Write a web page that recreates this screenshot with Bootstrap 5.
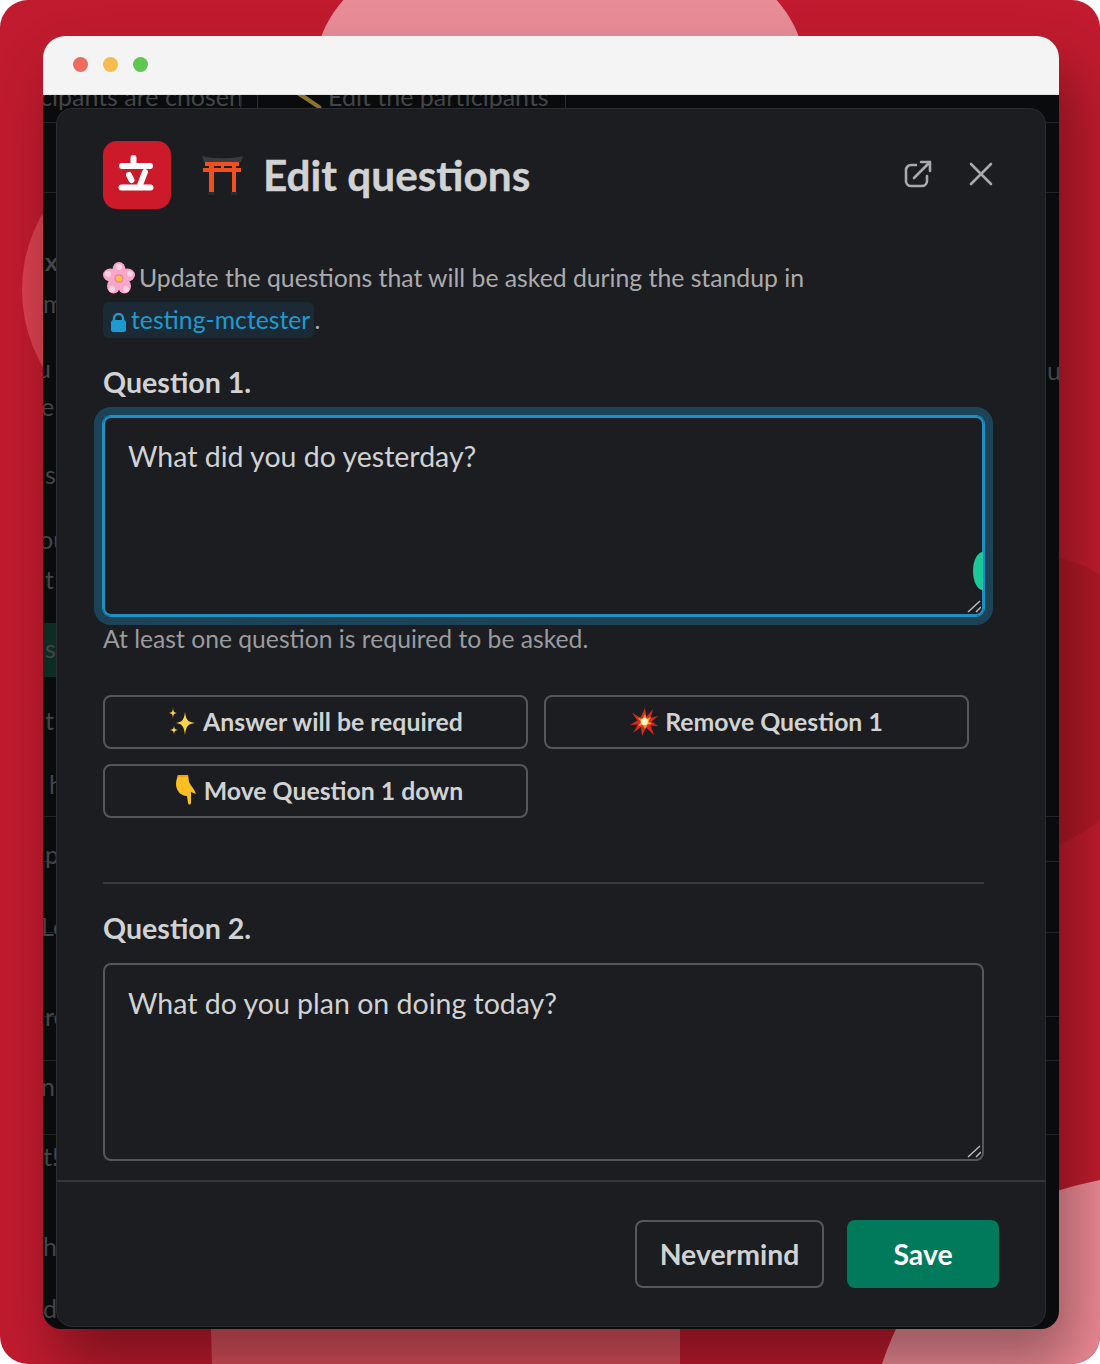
<!DOCTYPE html>
<html lang="en">
<head>
    <meta charset="UTF-8">
    <title>Edit questions</title>
    <link href="https://cdn.jsdelivr.net/npm/bootstrap@5.3.2/dist/css/bootstrap.min.css" rel="stylesheet">
    <style>
        html, body { margin: 0; background: #fff; }
        body { font-family: Lato, "Open Sans", sans-serif; }
        .stage {
            position: relative;
            width: 1100px;
            height: 1364px;
            padding: 36px 41px 35px 43px;
            background: #c01b2e;
            border-radius: 28px;
            overflow: hidden;
        }
        .blobs { position: absolute; inset: 0; }
        .app-window {
            position: relative;
            height: 1293px;
            border-radius: 22px 22px 18px 18px;
            background: #0a0b0d;
            overflow: hidden;
            box-shadow: 14px 36px 60px rgba(0, 0, 0, .36);
        }
        .title-bar {
            position: relative;
            z-index: 2;
            height: 59px;
            padding: 0 0 2px 30px;
            gap: 15px;
            background: #f4f4f4;
            border-bottom: 1px solid #e4e4e4;
        }
        .dot { width: 15px; height: 15px; border-radius: 50%; }
        .dot-r { background: #ee6b60; }
        .dot-y { background: #f5bd4f; }
        .dot-g { background: #61c554; }
        .behind { position: absolute; inset: 0; color: #434548; font-size: 25px; line-height: 1; }
        .behind span { position: absolute; white-space: nowrap; }
        .behind i { position: absolute; left: 0; width: 100%; height: 1px; background: #212326; }
        .behind u { position: absolute; top: 59px; width: 1px; height: 20px; background: #2a2c2f; }
        .behind .green-row { position: absolute; left: 0; top: 587px; width: 14px; height: 54px; background: #0e2d22; }
        .slack-modal {
            position: relative;
            z-index: 1;
            height: 1219px;
            margin: 13px 13px 0;
            background: #1b1d21;
            border: 1px solid #2b2d31;
            border-radius: 16px;
            color: #d1d2d3;
        }
        .modal-top { height: 100px; padding: 32px 52px 0 46px; }
        .app-logo { width: 68px; height: 68px; border-radius: 14px; background: #cd1a2b; }
        .modal-title { margin: 0 0 0 20px; font-size: 42.300px; font-weight: 700; line-height: 68px; color: #d1d2d3; -webkit-text-stroke: .4px #d1d2d3; }
        .torii { margin: 15px 0 0 31px; }
        .modal-main { height: 971px; padding: 48px 61px 0 46px; overflow: hidden; }
        .intro { margin: 0; font-size: 24.75px; line-height: 42px; color: #ababad; }
        .intro svg { vertical-align: -7px; margin-right: 4px; }
        .chan { display: inline-block; height: 36px; padding: 0 4px 0 8px; line-height: 36px; border-radius: 6px; background: #1c2a35; color: #1d9bd1; }
        .chan svg { vertical-align: -3px; margin-right: 5px; }
        .q-label { margin: 0 0 16px; font-size: 28.6px; font-weight: 700; line-height: 36px; color: #d1d2d3; }
        .q-label-2 { margin-bottom: 17px; }
        .q-box {
            display: block;
            width: 881px;
            padding: 19px 23px;
            font-family: inherit;
            font-size: 28.5px;
            line-height: 38px;
            color: #d1d2d3;
            background: transparent;
            border: 2px solid #55575b;
            border-radius: 8px;
            resize: none;
        }
        .q-box.form-control { background: transparent; color: #d1d2d3; border-color: #55575b; }
        .q-box.is-on.form-control { border-color: #1d8fc0; box-shadow: 0 0 0 1px #1d8fc0, 0 0 0 9px #1d4358; }
        .field-wrap { position: relative; width: 881px; }
        .gram-dot { position: absolute; left: 870px; top: 136px; width: 10px; height: 38px; border-radius: 100% 0 0 100% / 50% 0 0 50%; background: #1cc79a; }
        .grip { position: absolute; right: 3px; bottom: 3px; }
        .hint { margin: 4px 0 37px; font-size: 24.7px; line-height: 38px; color: #9a9b9e; }
        .act-grid { display: grid; grid-template-columns: 425px 425px; gap: 15px 16px; }
        .act-btn.btn {
            height: 54px;
            padding: 0;
            display: flex;
            align-items: center;
            justify-content: center;
            gap: 7px;
            font-size: 24.8px;
            font-weight: 700;
            color: #d1d2d3;
            border: 2px solid #55575b;
            border-radius: 8px;
        }
        .finger { margin: 0 1px 2px 8px; }
        .rule { width: 881px; height: 2px; margin: 64px 0 26px; background: #36383c; }
        .q2-box { height: 198px; }
        .modal-bottom {
            height: 146px;
            padding: 38px 46px 0 0;
            border-top: 2px solid #34363a;
        }
        .foot-btn.btn {
            height: 68px;
            padding: 0;
            font-size: 28.4px;
            font-weight: 700;
            border-radius: 8px;
        }
        .foot-ghost.btn { width: 189px; color: #d1d2d3; border: 2px solid #55575b; background: transparent; }
        .foot-save.btn { width: 152px; margin-left: 23px; color: #fff; background: #007a5a; border: 0; }
    </style>
</head>
<body>
<div class="stage">
    <!-- background shapes behind the window -->
    <svg class="blobs" width="1100" height="1364" viewBox="0 0 1100 1364">
        <ellipse cx="560" cy="70" rx="245" ry="150" fill="#e88c98"/>
        <circle cx="175" cy="290" r="153" fill="#d8404f"/>
        <path d="M1100 575C1070 556 1040 552 1000 556V860C1050 855 1080 835 1100 820Z" fill="#b01826"/>
        <path d="M210 1300H680V1364H212Z" fill="#d8505c"/>
        <path d="M882 1364C920 1250 1000 1200 1100 1180V1364Z" fill="#ee8a95"/>
    </svg>

    <div class="app-window">
        <div class="title-bar d-flex align-items-center">
            <div class="dot dot-r"></div>
            <div class="dot dot-y"></div>
            <div class="dot dot-g"></div>
        </div>

        <!-- dimmed page under the modal -->
        <div class="behind">
            <span style="left:-3px;top:48px">cipants are chosen</span>
            <u style="left:197px"></u>
            <u style="left:214px"></u>
            <svg style="position:absolute;left:254px;top:59px" width="26" height="14" viewBox="0 0 26 14"><path d="M0 0H8L24 11 25 14 20 13Z" fill="#8a7330"/></svg>
            <span style="left:285px;top:48px">Edit the participants</span>
            <u style="left:522px"></u>
            <i style="top:86px"></i>
            <i style="top:156px"></i>
            <i style="top:780px"></i>
            <i style="top:825px"></i>
            <i style="top:896px"></i>
            <i style="top:980px"></i>
            <i style="top:1024px"></i>
            <i style="top:1098px"></i>
            <b class="green-row"></b>
            <span style="left:2px;top:213px;font-weight:700">x</span>
            <span style="left:0;top:255px">m</span>
            <span style="left:-6px;top:320px">u</span>
            <span style="left:-2px;top:358px">e</span>
            <span style="left:2px;top:426px">s</span>
            <span style="left:-4px;top:491px">ou</span>
            <span style="left:2px;top:531px">t</span>
            <span style="left:2px;top:600px">s</span>
            <span style="left:2px;top:672px">t</span>
            <span style="left:6px;top:736px">h</span>
            <span style="left:2px;top:806px">p</span>
            <span style="left:-2px;top:878px">Le</span>
            <span style="left:2px;top:968px">re</span>
            <span style="left:-2px;top:1038px">n</span>
            <span style="left:0;top:1108px">t!</span>
            <span style="left:0;top:1198px">h</span>
            <span style="left:0;top:1260px">d</span>
            <span style="left:1004px;top:322px">u</span>
        </div>

        <div class="slack-modal d-flex flex-column">
            <div class="modal-top d-flex align-items-start">
                <div class="app-logo">
                    <svg width="68" height="68" viewBox="0 0 68 68" fill="none" stroke="#fff" stroke-width="6" stroke-linecap="round">
                        <path d="M19 25H47M18.500 46.500H47.500M30.500 17V24M26 34L28.500 39M42 31L37 44"/>
                    </svg>
                </div>
                <svg class="torii" width="41" height="40" viewBox="0 0 41 40">
                    <path d="M0 0C10 3 31 3 41 0L39 6H2Z" fill="#3b3b3d"/>
                    <path d="M3 6H37V10H3ZM1 12H39V16H1ZM7 6H12V36H7ZM30 6H34V36H30ZM19 10H22V12H19Z" fill="#f0501e"/>
                    <path d="M6 36H12V39H6ZM29 36H35V39H29Z" fill="#2a2a2c"/>
                </svg>
                <h1 class="modal-title">Edit questions</h1>
                <div class="ms-auto d-flex align-items-center" style="gap:37px;margin-top:19px">
                    <svg width="28" height="28" viewBox="0 0 28 28" fill="none" stroke="#a8a9ab" stroke-width="2.6" stroke-linecap="round" stroke-linejoin="round">
                        <path d="M12 5H7A5 5 0 0 0 2 10V21A5 5 0 0 0 7 26H18A5 5 0 0 0 23 21V16M10 18L26 2M17 2H26V11"/>
                    </svg>
                    <svg width="24" height="24" viewBox="0 0 24 24" fill="none" stroke="#a8a9ab" stroke-width="2.6" stroke-linecap="round">
                        <path d="M2 2L22 22M22 2L2 22"/>
                    </svg>
                </div>
            </div>

            <div class="modal-main">
                <p class="intro">
                    <svg width="32" height="32" viewBox="0 0 32 32">
                        <g fill="#f9a6cb">
                            <ellipse cx="16" cy="8" rx="6.500" ry="8"/>
                            <ellipse cx="24.500" cy="13" rx="7.500" ry="6.500"/>
                            <ellipse cx="21.500" cy="24" rx="6.500" ry="7.500"/>
                            <ellipse cx="10.500" cy="24" rx="6.500" ry="7.500"/>
                            <ellipse cx="7.500" cy="13" rx="7.500" ry="6.500"/>
                        </g>
                        <g fill="#fdd0e2">
                            <circle cx="16" cy="5" r="3"/>
                            <circle cx="27" cy="12" r="3"/>
                            <circle cx="23" cy="27" r="3"/>
                            <circle cx="9" cy="27" r="3"/>
                            <circle cx="5" cy="12" r="3"/>
                        </g>
                        <circle cx="16" cy="16.500" r="4.500" fill="#ef7fb0"/>
                        <circle cx="16" cy="16.500" r="3" fill="#f5c542"/>
                    </svg>Update the questions that will be asked during the standup in<br>
                    <span class="chan"><svg width="15" height="19" viewBox="0 0 15 19"><path d="M3 8V5.500a4.500 4.500 0 0 1 9 0V8" fill="none" stroke="#1d9bd1" stroke-width="2.400"/><rect y="7" width="15" height="12" rx="2.500" fill="#1d9bd1"/></svg>testing-mctester</span>.
                </p>

                <h2 class="q-label" style="margin-top:23px">Question 1.</h2>
                <div class="field-wrap">
                    <textarea class="form-control q-box is-on" style="height:200px">What did you do yesterday?</textarea>
                    <div class="gram-dot"></div>
                    <svg class="grip" width="14" height="13" viewBox="0 0 14 13" stroke="#b9babb" stroke-width="1.500" fill="none"><path d="M1 12L13 1M9 12L14 7"/></svg>
                </div>
                <p class="hint">At least one question is required to be asked.</p>

                <div class="act-grid">
                    <button type="button" class="btn act-btn">
                        <svg width="28" height="28" viewBox="0 0 28 28" fill="#f8d34c">
                            <path d="M17 4C18 12 20 14 27 15 20 16 18 18 17 27 16 18 14 16 8 15 14 14 16 12 17 4Z"/>
                            <path d="M5 0C5.500 4 6 4.500 9 5 6 5.500 5.500 6 5 10 4.500 6 4 5.500 1 5 4 4.500 4.500 4 5 0Z"/>
                            <path d="M6 18C6.500 21 7 21.500 10 22 7 22.500 6.500 23 6 26 5.500 23 5 22.500 2 22 5 21.500 5.500 21 6 18Z"/>
                        </svg>
                        Answer will be required
                    </button>
                    <button type="button" class="btn act-btn">
                        <svg width="28" height="28" viewBox="0 0 28 28">
                            <path d="M15 0L16.500 9 23 1 20.500 10 28 8 21.500 13.500 28 18 20.500 17.500 24 27 16 19.500 12 28 11 19 3 25 8 16.500 0 17 7.500 12.500 2 5 10.500 9.500Z" fill="#d9291c"/>
                            <path d="M15 6L16.500 11 21 9 18.500 13.500 22 16 17.500 16.500 15 21 13 17 8 18 11 14 8 10 12.500 11Z" fill="#fb9b2c"/>
                            <circle cx="14.500" cy="13.500" r="3.500" fill="#fff6c9"/>
                        </svg>
                        Remove Question 1
                    </button>
                    <button type="button" class="btn act-btn">
                        <svg class="finger" width="20" height="30" viewBox="0 0 20 30">
                            <path d="M2 0H12L13 7C15 11 19 15 20 19L15 17 15 28C14.500 30 12.500 30 12 28L11 21C5 21 0 16 0 9 0 6 1 3 2 0Z" fill="#fbbf24"/>
                            <path d="M2 0H12L12.300 2H1.500Z" fill="#e8a317"/>
                        </svg>
                        Move Question 1 down
                    </button>
                </div>

                <div class="rule"></div>

                <h2 class="q-label q-label-2">Question 2.</h2>
                <div class="field-wrap">
                    <textarea class="form-control q-box q2-box">What do you plan on doing today?</textarea>
                    <svg class="grip" width="14" height="13" viewBox="0 0 14 13" stroke="#b9babb" stroke-width="1.500" fill="none"><path d="M1 12L13 1M9 12L14 7"/></svg>
                </div>
            </div>

            <div class="modal-bottom d-flex justify-content-end align-items-start">
                <button type="button" class="btn foot-btn foot-ghost">Nevermind</button>
                <button type="button" class="btn foot-btn foot-save">Save</button>
            </div>
        </div>
    </div>
</div>
<script src="https://cdn.jsdelivr.net/npm/bootstrap@5.3.2/dist/js/bootstrap.bundle.min.js"></script>
</body>
</html>
